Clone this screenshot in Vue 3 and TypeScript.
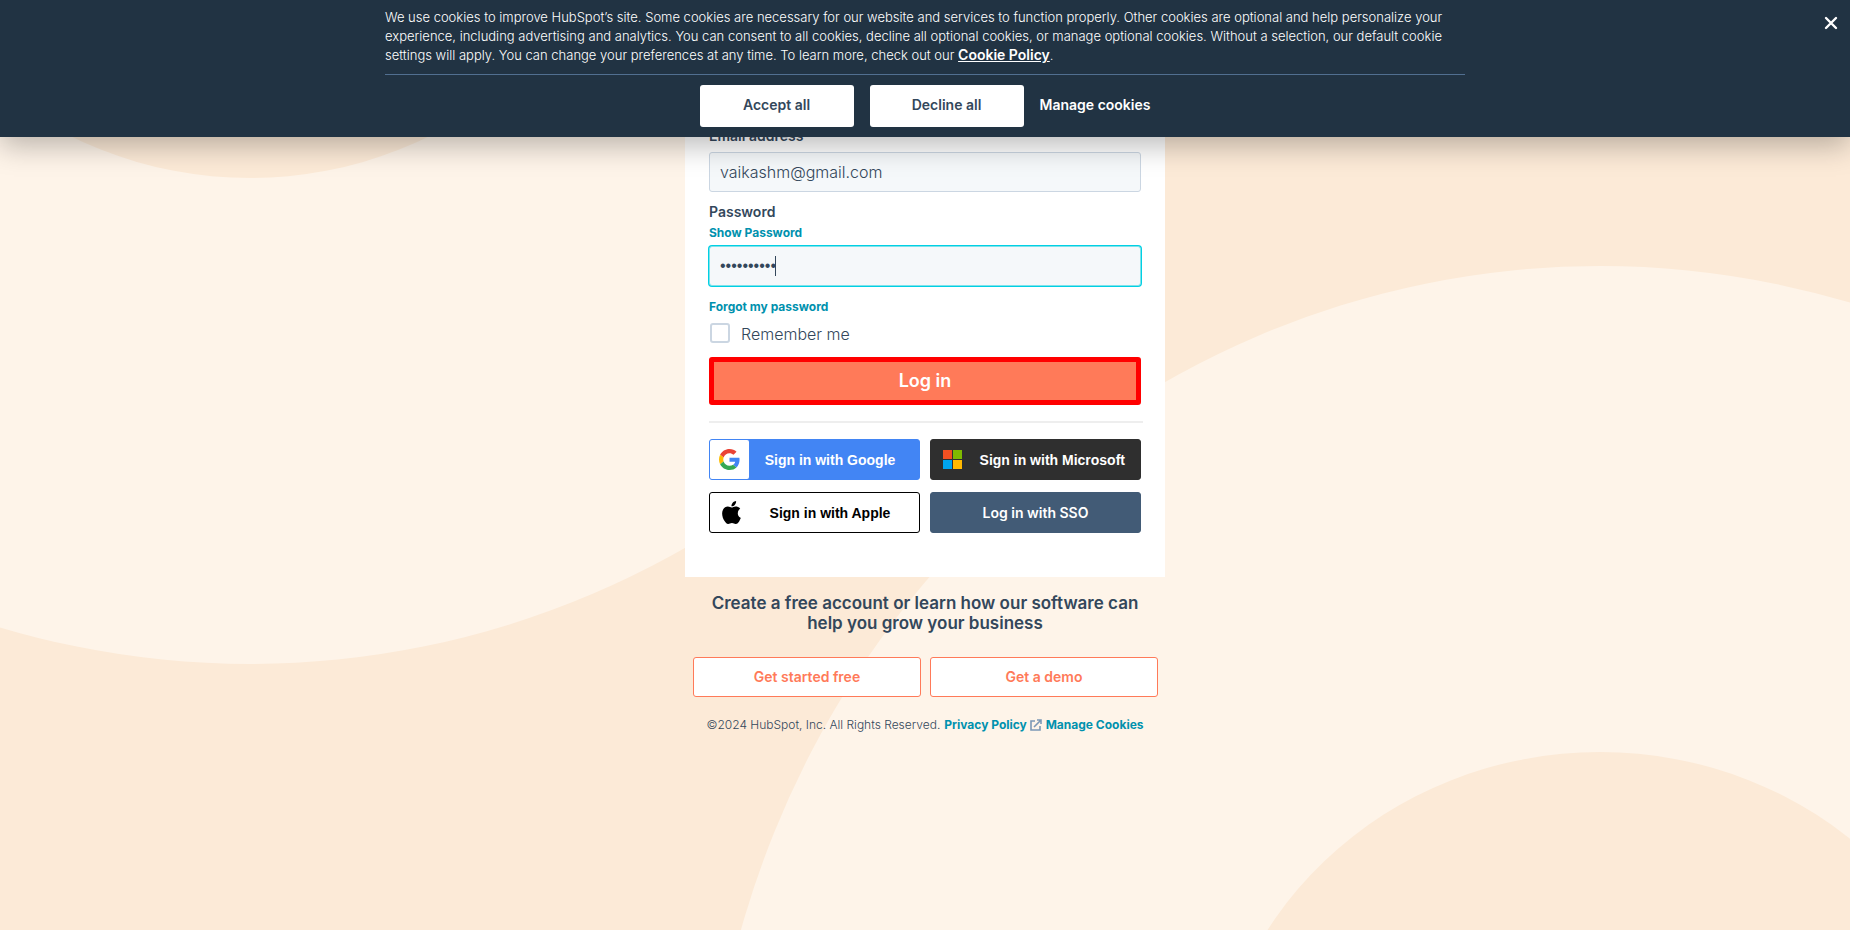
<script setup lang="ts">
import { ref } from 'vue'

const email = ref('vaikashm@gmail.com')
const password = ref('sunflower8')
const remember = ref(false)
</script>

<template>
  <div class="page">
    <svg class="backdrop" viewBox="0 0 1850 930" preserveAspectRatio="none" aria-hidden="true">
      <ellipse class="light" cx="250" cy="-254" rx="894" ry="918" />
      <ellipse class="dark" cx="250" cy="-195" rx="390" ry="373" />
      <ellipse class="light" cx="1600" cy="1184" rx="894" ry="918" />
      <ellipse class="dark" cx="1600" cy="1125" rx="390" ry="373" />
    </svg>

    <section class="banner" aria-label="Cookie preferences">
      <div class="banner-inner">
        <p class="banner-text">
          We use cookies to improve HubSpot’s site. Some cookies are necessary for our website and services to function properly. Other cookies are optional and help personalize your<br />
          experience, including advertising and analytics. You can consent to all cookies, decline all optional cookies, or manage optional cookies. Without a selection, our default cookie<br />
          settings will apply. You can change your preferences at any time. To learn more, check out our <a href="#cookie-policy">Cookie Policy</a>.
        </p>
        <div class="banner-actions">
          <button type="button" class="consent">Accept all</button>
          <button type="button" class="consent">Decline all</button>
          <button type="button" class="manage">Manage cookies</button>
        </div>
      </div>
      <button type="button" class="close" aria-label="Close">
        <svg width="14" height="14" viewBox="0 0 14 14">
          <path d="M2 2L12 12M12 2L2 12" fill="none" stroke="#fff" stroke-width="2.4" stroke-linecap="round" />
        </svg>
      </button>
    </section>

    <main class="content">
      <form class="card" @submit.prevent>
        <label class="label" for="email">Email address</label>
        <input id="email" v-model="email" class="field" type="email" />
        <label class="label label-password" for="password">Password</label>
        <a class="link show" href="#show">Show Password</a>
        <div class="password-box">
          <input id="password" v-model="password" class="field focused" type="password" />
          <span class="caret" aria-hidden="true"></span>
        </div>
        <a class="link forgot" href="#forgot">Forgot my password</a>
        <label class="remember"><input v-model="remember" type="checkbox" /><span>Remember me</span></label>
        <button type="submit" class="login">Log in</button>
        <hr />
        <div class="providers">
          <button type="button" class="provider google">
            <span class="icon">
              <svg width="21" height="21" viewBox="0 0 48 48">
                <path fill="#EA4335" d="M24 9.5c3.54 0 6.71 1.22 9.21 3.6l6.85-6.85C35.9 2.38 30.47 0 24 0 14.62 0 6.51 5.38 2.56 13.22l7.98 6.19C12.43 13.72 17.74 9.5 24 9.5z" />
                <path fill="#4285F4" d="M46.98 24.55c0-1.57-.15-3.09-.38-4.55H24v9.02h12.94c-.58 2.96-2.26 5.48-4.78 7.18l7.73 6c4.51-4.18 7.09-10.36 7.09-17.65z" />
                <path fill="#FBBC05" d="M10.53 28.59c-.48-1.45-.76-2.99-.76-4.59s.27-3.14.76-4.59l-7.98-6.19C.92 16.46 0 20.12 0 24c0 3.88.92 7.54 2.56 10.78l7.97-6.19z" />
                <path fill="#34A853" d="M24 48c6.48 0 11.93-2.13 15.89-5.81l-7.73-6c-2.15 1.45-4.92 2.3-8.16 2.3-6.26 0-11.57-4.22-13.47-9.91l-7.98 6.19C6.51 42.62 14.62 48 24 48z" />
              </svg>
            </span>
            <span class="name">Sign in with Google</span>
          </button>
          <button type="button" class="provider microsoft">
            <span class="icon">
              <svg width="19" height="19" viewBox="0 0 19 19">
                <path fill="#F25022" d="M0 0h9v9H0z" />
                <path fill="#7FBA00" d="M10 0h9v9h-9z" />
                <path fill="#00A4EF" d="M0 10h9v9H0z" />
                <path fill="#FFB900" d="M10 10h9v9h-9z" />
              </svg>
            </span>
            <span class="name">Sign in with Microsoft</span>
          </button>
          <button type="button" class="provider apple">
            <span class="icon">
              <svg width="23" height="23" viewBox="0 0 24 24">
                <path d="M12.152 6.896c-.948 0-2.415-1.078-3.96-1.04-2.04.027-3.91 1.183-4.961 3.014-2.117 3.675-.546 9.103 1.519 12.09 1.013 1.454 2.208 3.09 3.792 3.039 1.52-.065 2.09-.987 3.935-.987 1.831 0 2.35.987 3.96.948 1.637-.026 2.676-1.48 3.676-2.948 1.156-1.688 1.636-3.325 1.662-3.415-.039-.013-3.182-1.221-3.22-4.857-.026-3.04 2.48-4.494 2.597-4.559-1.429-2.09-3.623-2.324-4.39-2.376-2-.156-3.675 1.09-4.61 1.09zM15.53 3.83c.843-1.012 1.4-2.427 1.245-3.83-1.207.052-2.662.805-3.532 1.818-.78.896-1.454 2.338-1.273 3.714 1.338.104 2.715-.688 3.559-1.701" />
              </svg>
            </span>
            <span class="name">Sign in with Apple</span>
          </button>
          <button type="button" class="provider sso">Log in with SSO</button>
        </div>
      </form>

      <h2>Create a free account or learn how our software can help you grow your business</h2>
      <div class="offers">
        <a href="#signup">Get started free</a>
        <a href="#demo">Get a demo</a>
      </div>
      <footer>
        <span>©2024 HubSpot, Inc. All Rights Reserved.</span>
        <a class="link" href="#privacy">
          Privacy Policy
          <svg width="12" height="12" viewBox="0 0 12 12" aria-hidden="true">
            <path d="M5 2H1V11H10V7M4 8L10.5 1.5M7 1H11V5" fill="none" stroke="#7c98b6" stroke-width="1.6" />
          </svg>
        </a>
        <a class="link" href="#cookies">Manage Cookies</a>
      </footer>
    </main>
  </div>
</template>

<style>
body {
  margin: 0;
  background: #fcead7;
}
</style>

<style scoped>
.page {
  position: relative;
  min-height: 100vh;
  overflow: hidden;
  font-family: Inter, "Liberation Sans", sans-serif;
  color: #33475b;
}
.page *,
.page {
  box-sizing: border-box;
}
button,
input {
  font-family: inherit;
  margin: 0;
}
button {
  cursor: pointer;
}
.backdrop {
  position: absolute;
  inset: 0;
  width: 100%;
  height: 100%;
}
.light {
  fill: #fef4e9;
}
.dark {
  fill: #fcead7;
}
.banner {
  position: absolute;
  top: 0;
  left: 0;
  right: 0;
  z-index: 2;
  padding: 8px 16px 10px;
  background: #213343;
  box-shadow: 0 8px 28px rgba(0, 0, 0, 0.28);
  color: #fff;
}
.banner-inner {
  max-width: 1080px;
  margin: 0 auto;
}
.banner-text {
  margin: 0;
  padding-bottom: 9px;
  border-bottom: 1px solid #516f90;
  font-size: 13px;
  font-weight: 300;
  line-height: 19px;
  white-space: nowrap;
}
.banner-text a {
  color: #fff;
  font-size: 14px;
  font-weight: 600;
  line-height: 14px;
}
.banner-actions {
  display: flex;
  justify-content: center;
  gap: 16px;
  padding-top: 10px;
}
.consent,
.manage {
  height: 42px;
  padding: 0 0 4px;
  border: 0;
  border-radius: 3px;
  font-size: 14px;
  font-weight: 600;
}
.consent {
  width: 154px;
  background: #fff;
  color: #33475b;
}
.manage {
  background: none;
  color: #fff;
}
.close {
  position: absolute;
  top: 16px;
  right: 12px;
  display: flex;
  padding: 0;
  border: 0;
  background: none;
}
.content {
  position: relative;
  display: flex;
  flex-direction: column;
  align-items: center;
  width: 480px;
  max-width: 100%;
  margin: 0 auto;
}
.card {
  display: flex;
  flex-direction: column;
  width: 100%;
  padding: 124px 24px 44px;
  background: #fff;
}
.label {
  align-self: flex-start;
  font-size: 14px;
  font-weight: 600;
  line-height: 24px;
}
.label-password {
  margin-top: 8px;
}
.link {
  color: #0091ae;
  font-size: 12px;
  font-weight: 700;
  text-decoration: none;
}
.show,
.forgot {
  align-self: flex-start;
  line-height: 18px;
}
.field {
  width: 100%;
  height: 40px;
  margin-top: 4px;
  padding: 0 10px;
  border: 1px solid #cbd6e2;
  border-radius: 3px;
  outline: none;
  background: #f5f8fa;
  color: #33475b;
  font-size: 16px;
  font-weight: 300;
}
.password-box {
  position: relative;
}
.focused {
  border-color: #7fe2ea;
  box-shadow: 0 0 0 1px #00d0e4;
  font-family: "Liberation Sans", Arial, sans-serif;
  caret-color: transparent;
}
.caret {
  position: absolute;
  top: 14px;
  left: 66px;
  width: 1px;
  height: 20px;
  background: #33475b;
}
.forgot {
  margin-top: 12px;
}
.remember {
  display: flex;
  align-items: center;
  align-self: flex-start;
  gap: 11px;
  height: 20px;
  margin: 7px 0 14px 1px;
  font-size: 16px;
  font-weight: 300;
}
.remember span {
  padding-top: 2px;
}
.remember input {
  appearance: none;
  width: 20px;
  height: 20px;
  border: 2px solid #cbd6e2;
  border-radius: 3px;
  background: #fff;
}
.login {
  height: 48px;
  padding: 0 0 2px;
  border: 5px solid #f00;
  border-radius: 3px;
  background: #ff7a59;
  color: #fff;
  font-size: 18px;
  font-weight: 600;
}
hr {
  align-self: stretch;
  height: 2px;
  margin: 16px -2px 16px 0;
  border: 0;
  background: #eee;
}
.providers {
  display: grid;
  grid-template-columns: 1fr 1fr;
  gap: 12px 10px;
}
.provider {
  display: flex;
  align-items: center;
  height: 41px;
  padding: 0;
  border: 1px solid;
  border-radius: 3px;
  color: #fff;
  font-family: "Liberation Sans", Arial, sans-serif;
  font-size: 14px;
  font-weight: 700;
}
.icon {
  display: flex;
  align-items: center;
  justify-content: center;
  width: 39px;
  height: 39px;
  border-radius: 2px;
}
.name {
  flex: 1;
  text-align: center;
  white-space: nowrap;
}
.google {
  border-color: #4285f4;
  background: #4285f4;
}
.google .icon {
  background: #fff;
}
.google .name {
  padding-right: 8px;
}
.microsoft {
  border-color: #2f2f2f;
  background: #2f2f2f;
}
.microsoft .icon {
  width: 43px;
}
.microsoft .name {
  padding-right: 15px;
  text-align: right;
}
.apple {
  border-color: #000;
  background: #fff;
  color: #000;
}
.apple .icon {
  width: 43px;
}
.apple .name {
  padding-right: 12px;
}
.sso {
  justify-content: center;
  border-color: #425b76;
  background: #425b76;
  font-family: inherit;
  font-weight: 600;
}
h2 {
  margin: 16px 20px 24px;
  font-size: 17px;
  font-weight: 600;
  line-height: 20px;
  text-align: center;
}
.offers {
  display: grid;
  grid-template-columns: 1fr 1fr;
  gap: 9px;
  width: 100%;
  padding: 0 7px 0 8px;
}
.offers a {
  height: 40px;
  border: 1px solid #ff7a59;
  border-radius: 3px;
  background: #fff;
  color: #ff7a59;
  font-size: 14px;
  font-weight: 600;
  line-height: 38px;
  text-align: center;
  text-decoration: none;
}
footer {
  display: flex;
  gap: 4px;
  margin-top: 19px;
  font-size: 12px;
  font-weight: 300;
  line-height: 18px;
  white-space: nowrap;
}
footer svg {
  vertical-align: -2px;
}
</style>
